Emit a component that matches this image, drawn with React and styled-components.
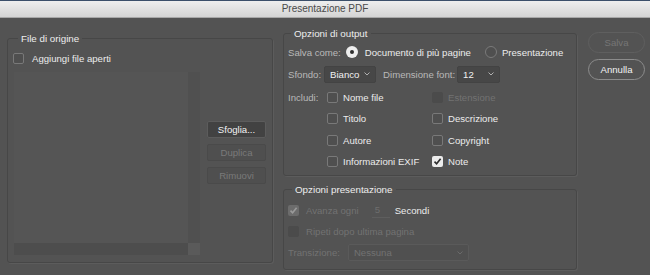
import React from 'react';
import styled, { createGlobalStyle, css } from 'styled-components';

const Global = createGlobalStyle`
  html, body {
    margin: 0;
    background: #535353;
    font-family: "Liberation Sans", Arial, sans-serif;
    font-size: 9.6px;
    overflow: hidden;
  }
`;

const Window = styled.div`
  width: 650px;
  height: 275px;
  background: #535353;
  display: flex;
  flex-direction: column;
`;

const TitleBar = styled.div`
  height: 16px;
  border-top: 1px solid #3b4f6a;
  border-bottom: 1px solid #a8a8a8;
  background: linear-gradient(#eeeeee, #d4d4d4);
  color: #4a4a4a;
  font-size: 10px;
  line-height: 16px;
  text-align: center;
`;

const Main = styled.div`
  display: flex;
  align-items: flex-start;
  padding-left: 7px;
`;

const Group = styled.fieldset`
  box-sizing: border-box;
  width: ${(p) => p.$width}px;
  margin: ${(p) => p.$top || 0}px 0 0 0;
  padding: 0 4px ${(p) => p.$padBottom || 0}px ${(p) => p.$padLeft || 4}px;
  border: 1px solid #474747;
  border-radius: 3px;
  box-shadow: 1px 1px 0 #5c5c5c;
  min-width: 0;
`;

const Legend = styled.legend`
  padding: 0 3px;
  margin-left: ${(p) => p.$offset || 3}px;
  font-size: 9.8px;
  line-height: 13px;
  color: #ededed;
`;

const Row = styled.div`
  display: flex;
  align-items: center;
  height: ${(p) => p.$h || 20}px;
  margin-top: ${(p) => p.$mt || 0}px;
  gap: ${(p) => p.$gap || 0}px;
`;

const Text = styled.span`
  white-space: nowrap;
  color: ${(p) =>
    p.$tone === 'label' ? '#b9b9b9' : p.$tone === 'off' ? '#727272' : '#ececec'};
  margin-left: ${(p) => p.$ml || 0}px;
`;

const Box = styled.span`
  box-sizing: border-box;
  width: 11px;
  height: 11px;
  border-radius: 2px;
  flex: none;
  display: flex;
  align-items: center;
  justify-content: center;
  ${(p) =>
    p.$disabled
      ? css`
          background: ${p.$checked ? '#6c6c6c' : '#4b4b4b'};
        `
      : p.$checked
      ? css`
          background: #ececec;
        `
      : css`
          background: #4f4f4f;
          border: 1px solid #797979;
        `}
`;

const Check = ({ checked, disabled }) => (
  <Box $checked={checked} $disabled={disabled}>
    {checked && (
      <svg width="9" height="9" viewBox="0 0 9 9">
        <polyline
          points="1.5,4.6 3.6,6.8 7.6,1.8"
          fill="none"
          stroke={disabled ? '#9a9a9a' : '#2c2c2c'}
          strokeWidth="1.6"
        />
      </svg>
    )}
  </Box>
);

const Radio = styled.span`
  box-sizing: border-box;
  width: 12px;
  height: 12px;
  border-radius: 50%;
  flex: none;
  display: flex;
  align-items: center;
  justify-content: center;
  margin-left: ${(p) => p.$ml || 0}px;
  ${(p) =>
    p.$on
      ? css`
          background: #eeeeee;
          &::after {
            content: '';
            width: 4px;
            height: 4px;
            border-radius: 50%;
            background: #2e2e2e;
          }
        `
      : css`
          background: #4f4f4f;
          border: 1px solid #7a7a7a;
        `}
`;

const SelectBox = styled.div`
  box-sizing: border-box;
  width: ${(p) => p.$w}px;
  height: 17px;
  flex: none;
  display: flex;
  align-items: center;
  justify-content: space-between;
  padding: 0 5px;
  border-radius: 2px;
  background: ${(p) => (p.$disabled ? '#505050' : '#474747')};
  border: 1px solid ${(p) => (p.$disabled ? '#5a5a5a' : '#434343')};
  color: ${(p) => (p.$disabled ? '#727272' : '#f2f2f2')};
  margin-left: ${(p) => p.$ml || 0}px;
`;

const Select = ({ w, value, disabled, ml }) => (
  <SelectBox $w={w} $disabled={disabled} $ml={ml}>
    <span>{value}</span>
    <svg width="6" height="4" viewBox="0 0 6 4">
      <polyline points="0.5,0.5 3,3 5.5,0.5" fill="none" stroke={disabled ? '#6a6a6a' : '#b0b0b0'} strokeWidth="1" />
    </svg>
  </SelectBox>
);

const Body = styled.div`
  display: flex;
  margin-top: 7px;
`;

const List = styled.div`
  width: 186px;
  height: 183px;
  margin-left: 1px;
  display: grid;
  grid-template-columns: 1fr 12px;
  grid-template-rows: 1fr 12px;
  background: #555555;
`;

const Track = styled.div`
  background: ${(p) => p.$c};
`;

const SideButtons = styled.div`
  display: flex;
  flex-direction: column;
  gap: 6px;
  margin-left: 7px;
  padding-top: 49px;
  width: 59px;
`;

const FlatButton = styled.div`
  box-sizing: border-box;
  height: 17px;
  border-radius: 2px;
  display: flex;
  align-items: center;
  justify-content: center;
  ${(p) =>
    p.$disabled
      ? css`
          background: #4f4f4f;
          border: 1px solid #4a4a4a;
          color: #7a7a7a;
        `
      : css`
          background: #424242;
          border: 1px solid #5c5c5c;
          color: #f2f2f2;
        `}
`;

const RightColumn = styled.div`
  display: flex;
  flex-direction: column;
  margin-left: 10px;
  margin-top: 9px;
`;

const Includes = styled.div`
  display: flex;
  margin-top: 3px;
`;

const IncludeLabel = styled(Text)`
  width: 39px;
  line-height: 21px;
`;

const CheckGrid = styled.div`
  display: grid;
  grid-template-columns: 105px 105px;
  grid-auto-rows: 21.3px;
`;

const CheckItem = styled.div`
  display: flex;
  align-items: center;
  gap: 5px;
`;

const NumberField = styled.div`
  width: 18px;
  height: 15px;
  box-sizing: border-box;
  border-bottom: 1px solid #5e5e5e;
  color: #6e6e6e;
  padding-left: 3px;
  line-height: 14px;
  margin-left: 13px;
  margin-right: 5px;
`;

const DialogButtons = styled.div`
  display: flex;
  flex-direction: column;
  gap: 6px;
  margin-left: 11px;
  margin-top: 14px;
`;

const Pill = styled.div`
  box-sizing: border-box;
  width: 57px;
  height: 21px;
  border-radius: 11px;
  display: flex;
  align-items: center;
  justify-content: center;
  border: 1px solid ${(p) => (p.$disabled ? '#5f5f5f' : '#8c8c8c')};
  color: ${(p) => (p.$disabled ? '#767676' : '#f2f2f2')};
`;

const includes = [
  ['Nome file', false, false],
  ['Estensione', false, true],
  ['Titolo', false, false],
  ['Descrizione', false, false],
  ['Autore', false, false],
  ['Copyright', false, false],
  ['Informazioni EXIF', false, false],
  ['Note', true, false],
];

export default function App() {
  return (
    <Window>
      <Global />
      <TitleBar>Presentazione PDF</TitleBar>
      <Main>
        <Group $width={266} $top={14} $padLeft={5} $padBottom={7}>
          <Legend $offset={5}>File di origine</Legend>
          <Row $h={14} $mt={6} $gap={8}>
            <Check />
            <Text>Aggiungi file aperti</Text>
          </Row>
          <Body>
            <List>
              <Track $c="#555555" />
              <Track $c="#505050" />
              <Track $c="#4d4d4d" />
              <Track $c="#5a5a5a" />
            </List>
            <SideButtons>
              <FlatButton>Sfoglia...</FlatButton>
              <FlatButton $disabled>Duplica</FlatButton>
              <FlatButton $disabled>Rimuovi</FlatButton>
            </SideButtons>
          </Body>
        </Group>

        <RightColumn>
          <Group $width={294} $padBottom={3}>
            <Legend>Opzioni di output</Legend>
            <Row $mt={2}>
              <Text $tone="label">Salva come:</Text>
              <Radio $on $ml={5} />
              <Text $ml={7}>Documento di più pagine</Text>
              <Radio $ml={14} />
              <Text $ml={5}>Presentazione</Text>
            </Row>
            <Row $mt={2}>
              <Text $tone="label">Sfondo:</Text>
              <Select w={52} value="Bianco" ml={3} />
              <Text $tone="label" $ml={7}>Dimensione font:</Text>
              <Select w={43} value="12" ml={2} />
            </Row>
            <Includes>
              <IncludeLabel $tone="label">Includi:</IncludeLabel>
              <CheckGrid>
                {includes.map(([label, checked, disabled]) => (
                  <CheckItem key={label}>
                    <Check checked={checked} disabled={disabled} />
                    <Text $tone={disabled ? 'off' : undefined}>{label}</Text>
                  </CheckItem>
                ))}
              </CheckGrid>
            </Includes>
          </Group>

          <Group $width={294} $top={7} $padBottom={6}>
            <Legend $offset={4}>Opzioni presentazione</Legend>
            <Row $h={21} $mt={4}>
              <Check checked disabled />
              <Text $tone="off" $ml={7}>Avanza ogni</Text>
              <NumberField>5</NumberField>
              <Text>Secondi</Text>
            </Row>
            <Row $h={21}>
              <Check disabled />
              <Text $tone="off" $ml={7}>Ripeti dopo ultima pagina</Text>
            </Row>
            <Row $h={21}>
              <Text $tone="off">Transizione:</Text>
              <Select w={121} value="Nessuna" disabled ml={8} />
            </Row>
          </Group>
        </RightColumn>

        <DialogButtons>
          <Pill $disabled>Salva</Pill>
          <Pill>Annulla</Pill>
        </DialogButtons>
      </Main>
    </Window>
  );
}
